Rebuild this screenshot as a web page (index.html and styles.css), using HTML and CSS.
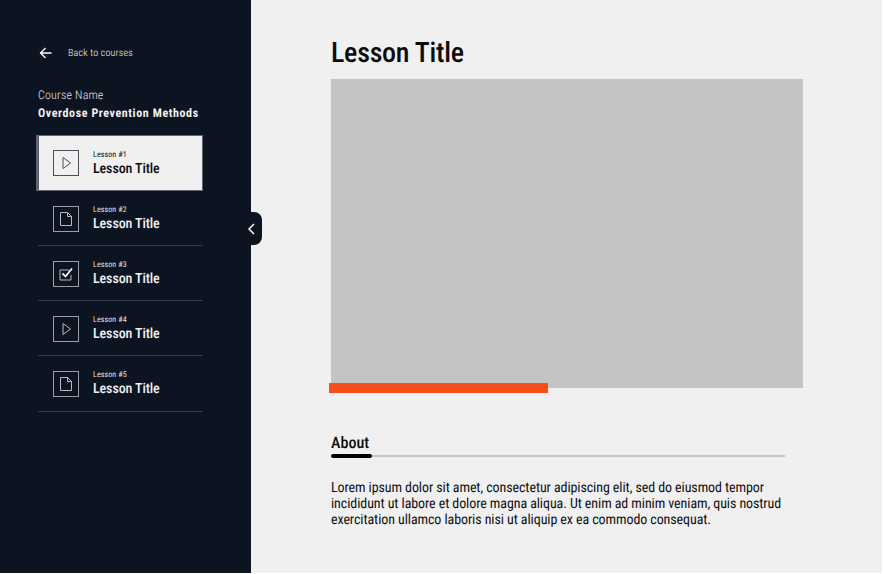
FILE: index.html
```html
<!DOCTYPE html>
<html lang="en">
<head>
    <meta charset="UTF-8">
    <title>Lesson Title</title>
    <link rel="stylesheet" href="styles.css">
</head>
<body>
<div class="page">
    <div class="sidebar">
        <a class="back" href="#">
            <svg class="back-arrow" width="14" height="12" viewBox="0 0 14 12"><path d="M12.500 6H1.500M6.500 1L1.500 6l5 5" fill="none" stroke="#fff" stroke-width="1.300"/></svg>
            <span class="back-text">Back to courses</span>
        </a>
        <div class="course">
            <div class="course-label">Course Name</div>
            <div class="course-name">Overdose Prevention Methods</div>
        </div>
        <ul class="lessons">
            <li class="lesson active">
                <span class="lesson-icon"><svg width="14" height="14" viewBox="0 0 14 14"><path d="M4 1.500L11.500 7 4 12.500z" fill="none" stroke="currentColor"/></svg></span>
                <div class="lesson-text"><div class="lesson-num">Lesson #1</div><div class="lesson-title">Lesson Title</div></div>
            </li>
            <li class="lesson">
                <span class="lesson-icon"><svg width="14" height="14" viewBox="0 0 14 14"><path d="M1.500.5h7l4 4v9h-11zM8.500.5v4h4" fill="none" stroke="currentColor"/></svg></span>
                <div class="lesson-text"><div class="lesson-num">Lesson #2</div><div class="lesson-title">Lesson Title</div></div>
            </li>
            <li class="lesson">
                <span class="lesson-icon"><svg width="16" height="14" viewBox="0 0 16 14"><path d="M13 8v5H2V3h9" fill="none" stroke="currentColor"/><path d="M4.500 6.500l3 3L14 1.500" fill="none" stroke="#fff" stroke-width="1.800"/></svg></span>
                <div class="lesson-text"><div class="lesson-num">Lesson #3</div><div class="lesson-title">Lesson Title</div></div>
            </li>
            <li class="lesson">
                <span class="lesson-icon"><svg width="14" height="14" viewBox="0 0 14 14"><path d="M4 1.500L11.500 7 4 12.500z" fill="none" stroke="currentColor"/></svg></span>
                <div class="lesson-text"><div class="lesson-num">Lesson #4</div><div class="lesson-title">Lesson Title</div></div>
            </li>
            <li class="lesson">
                <span class="lesson-icon"><svg width="14" height="14" viewBox="0 0 14 14"><path d="M1.500.5h7l4 4v9h-11zM8.500.5v4h4" fill="none" stroke="currentColor"/></svg></span>
                <div class="lesson-text"><div class="lesson-num">Lesson #5</div><div class="lesson-title">Lesson Title</div></div>
            </li>
        </ul>
        <a class="toggle" href="#"><svg width="7" height="12" viewBox="0 0 7 12"><path d="M6 1L1 6l5 5" fill="none" stroke="#fff" stroke-width="1.500"/></svg></a>
    </div>
    <div class="main">
        <h1 class="title">Lesson Title</h1>
        <div class="video">
            <div class="progress"></div>
        </div>
        <div class="about">
            <h2 class="about-head">About</h2>
            <div class="about-rule"><div class="about-mark"></div></div>
            <p class="about-text">Lorem ipsum dolor sit amet, consectetur adipiscing elit, sed do eiusmod tempor incididunt ut labore et dolore magna aliqua. Ut enim ad minim veniam, quis nostrud exercitation ullamco laboris nisi ut aliquip ex ea commodo consequat.</p>
        </div>
    </div>
</div>
</body>
</html>
```

FILE: styles.css
```css
*{margin:0;padding:0;list-style:none;box-sizing:border-box;}

body{font-family:"Roboto","Liberation Sans",sans-serif;font-stretch:75%;text-rendering:geometricPrecision;background:#fff;color:#0c0c0c;overflow:hidden;}
a{text-decoration:none;color:#fff;}

.page{display:flex;width:882px;height:573px;background:#f0f0f0;}

.sidebar{width:251px;flex:none;background:#0c1421;color:#fff;padding:45px 48px 0 36px;position:relative;}
.back{display:flex;align-items:center;height:15px;padding-left:3px;font-size:10px;font-weight:300;letter-spacing:.2px;}
.back-arrow{margin-right:15px;}
.back-text{margin-top:2px;color:#f0f0f0;}

.course{margin:26px 0 0 2px;}
.course-label{font-size:12px;line-height:18px;font-weight:300;letter-spacing:.2px;color:#e0e0e0;}
.course-name{font-size:12px;line-height:18px;font-weight:700;letter-spacing:.6px;color:#f0f0f0;}

.lessons{margin-top:13px;}
.lesson{display:flex;align-items:center;height:55px;margin-left:2px;padding-left:15px;padding-top:1px;border-bottom:1px solid #363c47;}
.lesson:last-child{height:56px;padding-bottom:1px;}
.lesson.active{height:56px;margin-left:0;padding:0 0 0 14px;background:#f0f0f0;color:#0c1421;border:1px solid #5e6570;border-left-width:3px;}
.lesson-icon{width:26px;height:26px;flex:none;margin-right:14px;border:1px solid #9a9ea6;color:#b9bcc2;display:flex;align-items:center;justify-content:center;}
.lesson.active .lesson-icon{border-color:#4a4f59;color:#4a4f59;}
.lesson-text{margin-top:1px;}
.lesson-num{font-size:8px;line-height:9px;margin-bottom:2px;letter-spacing:.1px;color:#e0e0e2;}
.lesson-title{font-size:14px;line-height:17px;font-weight:500;letter-spacing:-.1px;color:#f0f0f0;}
.lesson.active .lesson-num,.lesson.active .lesson-title{color:#0c0c0c;}

.toggle{position:absolute;left:240px;top:212px;width:22px;height:33px;background:#0c1421;border-radius:0 8px 8px 0;display:flex;align-items:center;justify-content:flex-end;padding-right:7px;}

.main{flex:1;padding:36px 0 0 80px;}
.title{font-size:28px;line-height:34px;font-weight:500;letter-spacing:-.25px;}
.video{width:472px;height:309px;margin-top:9px;background:#c4c4c4;position:relative;}
.progress{position:absolute;left:-2px;top:304px;width:219px;height:10px;background:#f94d1c;}

.about{width:454px;margin-top:45px;}
.about-head{font-size:16px;line-height:19px;font-weight:500;letter-spacing:.05px;}
.about-rule{height:2px;margin-top:3px;background:#c4c4c4;position:relative;}
.about-mark{position:absolute;left:0;top:-1px;width:41px;height:4px;border-radius:2px;background:#000;}
.about-text{margin-top:23px;font-size:14px;line-height:16px;letter-spacing:-.09px;color:#111;}
```
